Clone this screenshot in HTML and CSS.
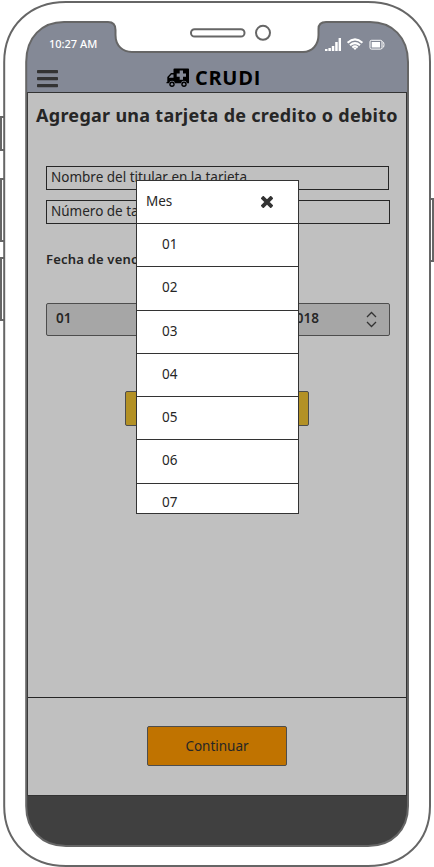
FILE: index.html
```html
<!DOCTYPE html>
<html lang="es">
<head>
<meta charset="utf-8">
<title>CRUDI</title>
<link rel="stylesheet" href="styles.css">
</head>
<body>
<div class="phone">
  <div class="screen">
    <header class="top">
      <div class="status">
        <span class="time">10:27 AM</span>
        <svg class="status-icons" width="62" height="16" viewBox="0 0 62 16" fill="#fff">
          <path d="M0 12h2.500v2H0zM3.400 11h2.500v3H3.400zM6.800 9h2.500v5H6.800zM10.200 5h2.500v9h-2.500zM13.600 1H16v13h-2.400z"/>
          <g fill="none" stroke="#fff" stroke-width="2"><path d="M22.600 5.800Q30 -1 37.400 5.800M25 8.300Q30 3.900 35 8.300M27.300 10.500Q30 8.300 32.700 10.500"/></g>
          <path d="M28.300 11.300Q30 10 31.700 11.300L30 13z"/>
          <rect x="45" y="3.300" width="12" height="8.800" rx="1.500" fill="none" stroke="#fff"/>
          <path d="M46.700 5h8.300v5.500h-8.300z"/><path d="M57.500 4.500Q59 5 59 7.700Q59 10.500 57.500 11" fill="none" stroke="#fff"/>
        </svg>
      </div>
      <div class="bar">
        <svg class="menu" width="21" height="18" viewBox="0 0 21 18" fill="#333"><rect width="21" height="3.300" rx=".7"/><rect y="7" width="21" height="3.300" rx=".7"/><rect y="14" width="21" height="3.300" rx=".7"/></svg>
        <div class="brand">
          <svg width="24" height="20" viewBox="0 0 24 20">
            <path d="M8.500.5H22.200Q23 .5 23 1.300V15.300H20.900A3 3 0 0 0 15 15.300H9A3 3 0 0 0 3.100 15.300H.5V14H1.300V9L5 4.900H7.500V1.300Q7.500.5 8.500.5Z"/>
            <path d="M3 9.700V9.200L5.500 6.500H7.500V9.700ZM13.700 2.500h3.300v3h3v3.200h-3v3h-3.300v-3h-3V5.500h3z" fill="#848996"/>
            <circle cx="6" cy="16.300" r="2.700"/><circle cx="18" cy="16.300" r="2.700"/>
            <circle cx="6" cy="16.300" r="1.200" fill="#848996"/><circle cx="18" cy="16.300" r="1.200" fill="#848996"/>
          </svg>
          <span>CRUDI</span>
        </div>
      </div>
    </header>
    <main class="panel">
      <section class="form">
        <h1>Agregar una tarjeta de credito o debito</h1>
        <div class="field name">Nombre del titular en la tarjeta</div>
        <div class="field number">Número de tarjeta</div>
        <h2>Fecha de vencimiento</h2>
        <div class="selects">
          <div class="select">01</div>
          <div class="select year"><span>2018</span>
            <svg width="11" height="17" viewBox="0 0 11 17" fill="none" stroke="#333" stroke-width="1.300"><path d="M1 6L5.500 1.500L10 6M1 11L5.500 15.500L10 11"/></svg>
          </div>
        </div>
        <div class="add"></div>
      </section>
      <section class="actions"><button>Continuar</button></section>
    </main>
    <div class="base"></div>
  </div>
  <div class="months">
    <div class="months-head"><span>Mes</span>
      <svg width="12" height="12" viewBox="0 0 12 12"><path d="M2.300 2.300L9.700 9.700M9.700 2.300L2.300 9.700" stroke="#333" stroke-width="3.800" stroke-linecap="square"/></svg>
    </div>
    <div class="month">01</div><div class="month">02</div><div class="month">03</div><div class="month">04</div><div class="month">05</div><div class="month">06</div><div class="month last">07</div>
  </div>
  <svg class="frame" width="434" height="867" viewBox="0 0 434 867">
    <path fill="#fff" fill-rule="evenodd" d="M0 0H434V867H0ZM26.200 62C26.200 37 42 22 64 22H108Q115.500 22 115.500 30V35C115.500 46 123 52 132 52H303C312 52 318.500 45 318.500 35V29Q318.500 22 326 22H370C392 22 408 37 408 62V806C408 830 392 846 368 846H66C42 846 26.200 830 26.200 806Z"/>
    <g fill="none" stroke="#666" stroke-width="2">
      <path d="M26.200 62C26.200 37 42 22 64 22H108Q115.500 22 115.500 30V35C115.500 46 123 52 132 52H303C312 52 318.500 45 318.500 35V29Q318.500 22 326 22H370C392 22 408 37 408 62V806C408 830 392 846 368 846H66C42 846 26.200 830 26.200 806Z"/>
      <path d="M4.200 62C4.200 26 30 2 66 2H368C404 2 430 26 430 62V806C430 842 404 866 368 866H66C30 866 4.200 842 4.200 806Z"/>
      <rect x="191" y="29.200" width="53.500" height="7.300" rx="3.600"/>
      <circle cx="263" cy="32.800" r="7"/>
      <path d="M4 117H1V150H4M4 179H1V241H4M4 258H1V320H4M431 199H433V261H431"/>
    </g>
  </svg>
</div>
</body>
</html>
```
FILE: styles.css
```css
* { box-sizing: border-box; }
body { margin: 0; background: #fff; color: #262626; font: 13.5px/18px "Noto Sans", "Open Sans", sans-serif; }
.phone { position: relative; width: 434px; height: 867px; padding: 22px 27px 21px; overflow: hidden; }
.screen { width: 380px; height: 824px; background: #848996; display: flex; flex-direction: column; }
.top { height: 70px; flex: none; }
.status { height: 44px; padding: 14px 20px 0 22px; display: flex; justify-content: space-between; color: #fff; }
.time { font: 500 11px/16px "Noto Sans", sans-serif; }
.status-icons { margin: 1px 0 0; }
.bar { display: flex; height: 26px; padding-left: 10px; }
.menu { margin-top: 4px; }
.brand { display: flex; margin-left: 108px; color: #000; font: 700 20px/24px "Open Sans", sans-serif; letter-spacing: .7px; }
.brand svg { margin: 2px 5px 0 0; }
.panel { height: 704px; flex: none; display: flex; flex-direction: column; background: #c0c0c0; border: 1px solid #333; }
.form { height: 605px; border-bottom: 1px solid #262626; padding: 0 16px 0 18px; display: flex; flex-direction: column; }
h1 { margin: 8px 0 0 -10px; font: 700 18px/28px "Noto Sans", sans-serif; letter-spacing: .28px; white-space: nowrap; }
.field { border: 1px solid #262626; height: 24px; padding: 0 4px; line-height: 21px; white-space: nowrap; }
.name { margin: 37px 1px 0 0; }
.number { margin-top: 10px; }
h2 { margin: 26px 0 0; font: 600 13px/18px "Noto Sans", sans-serif; letter-spacing: .2px; }
.selects { display: flex; gap: 20px; margin-top: 35px; }
.select { width: 162px; height: 33px; padding: 4px 9px; background: #a6a6a6; border: 1px solid #4d4d4d; border-radius: 2px; font-weight: 600; line-height: 20px; }
.year { display: flex; justify-content: space-between; padding: 4px 12px 4px 59px; }
.year svg { margin-top: 3px; }
.add { width: 184px; height: 35px; margin: 55px 0 0 79px; background: #b39125; border: 1px solid #4d4d4d; border-radius: 2px; }
.actions { flex: 1; padding-top: 28px; display: flex; justify-content: center; align-items: flex-start; }
button { width: 140px; height: 40px; padding: 0 0 1px; background: #c07300; border: 1px solid #4d4d4d; border-radius: 2px; color: #262626; font: 13.5px/18px "Noto Sans", sans-serif; }
.base { flex: 1; background: #404040; }
.months { position: absolute; left: 136px; top: 180px; width: 163px; height: 334px; background: #fff; border: 1px solid #333; overflow: hidden; display: grid; grid-template-rows: 43px 43px 44px 43px 43px 43px 44px 29px; }
.months > div { border-bottom: 1px solid #333; }
.months-head { display: flex; justify-content: space-between; padding: 11px 25px 0 9px; }
.months-head svg { margin-top: 4px; }
.month { padding: 11px 0 0 25px; }
.months > .last { padding-top: 9px; border: 0; }
.frame { position: absolute; left: 0; top: 0; pointer-events: none; }
```
